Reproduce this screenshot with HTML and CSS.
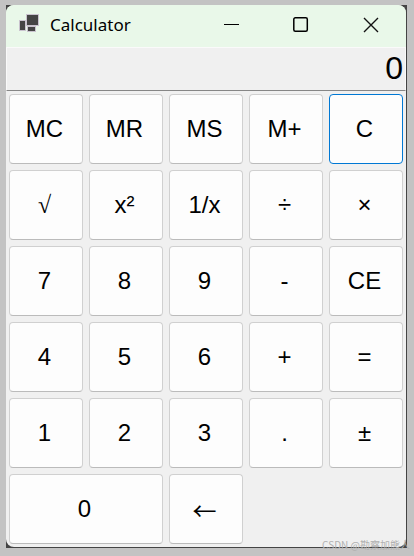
FILE: index.html
```html
<!DOCTYPE html>
<html lang="en">
<head>
    <meta charset="UTF-8">
    <meta name="viewport" content="width=device-width, initial-scale=1.0">
    <title>Calculator</title>
    <link rel="stylesheet" href="styles.css">
</head>
<body>
    <div class="frame">
        <main class="window">
            <header class="title-bar">
                <svg class="app-icon" width="20" height="20" viewBox="0 0 20 20" aria-hidden="true">
                    <g fill="#444" stroke="#c9c3ce" stroke-width="1">
                        <rect x="0.5" y="5.5" width="6" height="10"/>
                        <rect x="8.5" y="11.5" width="8" height="5"/>
                        <rect x="7.5" y="-0.5" width="12" height="11"/>
                    </g>
                </svg>
                <h1>Calculator</h1>
                <div class="window-controls">
                    <button type="button" aria-label="Minimize">
                        <svg width="16" height="16" viewBox="0 0 16 16"><path d="M1 6.5H16" stroke="#000"/></svg>
                    </button>
                    <button type="button" aria-label="Maximize">
                        <svg width="16" height="16" viewBox="0 0 16 16"><rect x="0.8" y="-0.2" width="13.5" height="13.5" rx="1.5" fill="none" stroke="#000" stroke-width="1.5" overflow="visible"/></svg>
                    </button>
                    <button type="button" aria-label="Close">
                        <svg width="16" height="16" viewBox="0 0 16 16"><path d="M1 0L15 14M15 0L1 14" stroke="#111" stroke-width="1.4"/></svg>
                    </button>
                </div>
            </header>
            <input class="display" type="text" value="0" aria-label="Result" readonly>
            <div class="keys">
                <button type="button">MC</button>
                <button type="button">MR</button>
                <button type="button">MS</button>
                <button type="button">M+</button>
                <button type="button" class="active">C</button>
                <button type="button" class="root">√</button>
                <button type="button">x²</button>
                <button type="button">1/x</button>
                <button type="button">÷</button>
                <button type="button">×</button>
                <button type="button">7</button>
                <button type="button">8</button>
                <button type="button">9</button>
                <button type="button">-</button>
                <button type="button">CE</button>
                <button type="button">4</button>
                <button type="button">5</button>
                <button type="button">6</button>
                <button type="button">+</button>
                <button type="button">=</button>
                <button type="button">1</button>
                <button type="button">2</button>
                <button type="button">3</button>
                <button type="button">.</button>
                <button type="button">±</button>
                <button type="button" class="wide">0</button>
                <button type="button" class="arrow">←</button>
            </div>
        </main>
    </div>
    <div class="watermark">CSDN @勘察加熊人</div>
</body>
</html>
```
FILE: styles.css
```css
:root {
    --desktop: #c3c3c3;
    --edge: #444444;
    --title-bg: #e9f8e9;
    --window-bg: #f0f0f0;
    --key-bg: #fdfdfd;
    --key-border: #d0d0d0;
    --accent: #0078d4;
}

* {
    box-sizing: border-box;
}

body {
    position: relative;
    margin: 0;
    padding: 5px 7px 8px 6px;
    background: var(--desktop);
    color: #000;
    font-family: "Liberation Sans", Arial, sans-serif;
}

svg {
    overflow: visible;
}

/* Dark backing that shows at the right and bottom edges and in the corners */
.frame {
    padding: 0 1px 1px 0;
    background: var(--edge);
}

.window {
    overflow: hidden;
    border-radius: 8px;
    background: var(--window-bg);
}

.title-bar {
    display: flex;
    align-items: center;
    height: 42px;
    padding: 0 0 2px 13px;
    background: var(--title-bg);
}

.app-icon {
    margin-right: 11px;
}

.title-bar h1 {
    margin: 0;
    font-family: "Segoe UI", "Noto Sans", sans-serif;
    font-size: 17px;
    font-weight: 400;
    line-height: 22px;
}

.window-controls {
    display: flex;
    align-self: stretch;
    margin-left: auto;
}

.window-controls button {
    display: flex;
    align-items: center;
    justify-content: center;
    width: 70px;
    padding: 2px 0 0;
    border: none;
    background: none;
}

.display {
    display: block;
    width: 100%;
    height: 44px;
    padding: 0 2px 2px;
    border: 1px solid #fafafa;
    border-bottom-color: #868686;
    background: var(--window-bg);
    color: #000;
    font-family: inherit;
    font-size: 32px;
    text-align: right;
    outline: none;
}

.keys {
    display: grid;
    grid-template-columns: repeat(5, 1fr);
    grid-auto-rows: 70px;
    gap: 6px;
    padding: 3px;
}

.keys button {
    padding: 0 3px 0 0;
    border: 1px solid var(--key-border);
    border-bottom-color: #bbbbbb;
    border-radius: 4px;
    background: var(--key-bg);
    color: #000;
    font-family: inherit;
    font-size: 24px;
}

.keys .active {
    border-color: var(--accent);
}

.keys .root {
    font-family: "Liberation Serif", "Times New Roman", serif;
}

.keys .wide {
    grid-column: span 2;
}

.keys .arrow {
    font-family: "Noto Sans CJK SC", sans-serif;
}

.watermark {
    position: absolute;
    right: 4px;
    bottom: 4px;
    color: #b0b0b0;
    font-family: "Noto Sans CJK SC", sans-serif;
    font-size: 10px;
    line-height: 14px;
}
```
